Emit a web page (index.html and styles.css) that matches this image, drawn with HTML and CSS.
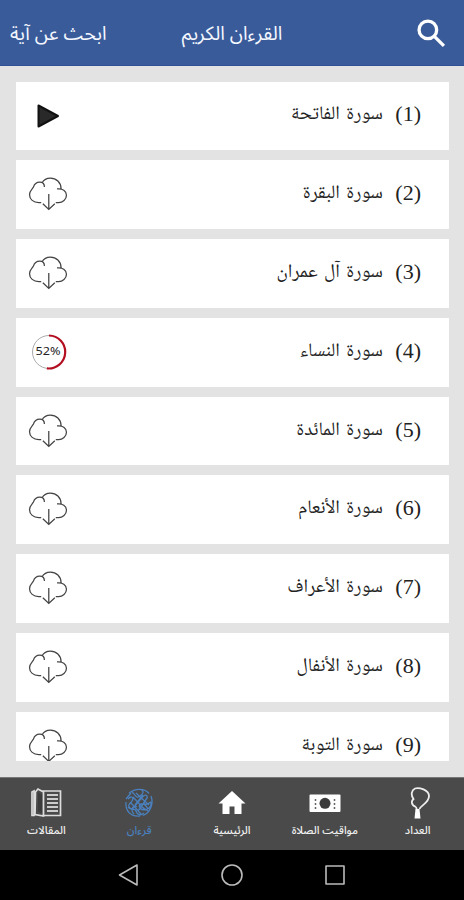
FILE: index.html
```html
<!DOCTYPE html>
<html lang="ar" dir="rtl">
  <head>
    <meta charset="UTF-8" />
    <meta name="viewport" content="width=device-width, initial-scale=1.0" />
    <title>القرءان الكريم</title>
    <link rel="stylesheet" href="styles.css">
  </head>
  <body>
    <!-- Shared icon -->
    <svg class="defs" width="0" height="0">
      <symbol id="cloud" viewBox="0 0 40 35">
        <path d="M13 26.3H10.500C5 26.300 1 23 1 18.300C1 14.500 3.500 12.500 5 10.500C6 7 8.500 5.300 11.500 5.300C14.500 5.300 16.300 7.500 16.300 10.300M13.700 6.300C15.500 3 18.500 1.200 22.500 1.200C28.500 1.200 33.300 5.500 33.500 12M29.300 12.300C35 11.500 39 14.500 39 18.700C39 23 35 26.300 31 26.300H28M20.800 17.500V33M14.700 27.500L20.800 33.300L27 27.500"/>
      </symbol>
    </svg>

    <header class="topbar">
      <svg class="search" viewBox="0 0 28 28"><circle cx="10.500" cy="10.500" r="8.500"/><path d="M16.500 16.500L26 26"/></svg>
      <h1 class="topbar-title">القرءان الكريم</h1>
      <span class="topbar-link">ابحث عن آية</span>
    </header>

    <main class="list">
      <div class="card"><span class="num">(1)</span><span class="name">سورة الفاتحة</span>
        <svg class="play" viewBox="0 0 24 26"><path d="M2.500 2.500V23.500L22 13Z"/></svg></div>
      <div class="card"><span class="num">(2)</span><span class="name">سورة البقرة</span>
        <svg class="cloud"><use href="#cloud"/></svg></div>
      <div class="card"><span class="num">(3)</span><span class="name">سورة آل عمران</span>
        <svg class="cloud"><use href="#cloud"/></svg></div>
      <div class="card"><span class="num">(4)</span><span class="name">سورة النساء</span>
        <svg class="progress" viewBox="0 0 36 36">
          <circle class="track" cx="18" cy="18" r="16.500"/>
          <path class="done" d="M18 1.500A16.500 16.500 0 1 1 15.900 34.400"/>
          <text x="17" y="21.300" direction="ltr" textLength="25" lengthAdjust="spacingAndGlyphs">52%</text>
        </svg></div>
      <div class="card"><span class="num">(5)</span><span class="name">سورة المائدة</span>
        <svg class="cloud"><use href="#cloud"/></svg></div>
      <div class="card"><span class="num">(6)</span><span class="name">سورة الأنعام</span>
        <svg class="cloud"><use href="#cloud"/></svg></div>
      <div class="card"><span class="num">(7)</span><span class="name">سورة الأعراف</span>
        <svg class="cloud"><use href="#cloud"/></svg></div>
      <div class="card"><span class="num">(8)</span><span class="name">سورة الأنفال</span>
        <svg class="cloud"><use href="#cloud"/></svg></div>
      <div class="card"><span class="num">(9)</span><span class="name">سورة التوبة</span>
        <svg class="cloud"><use href="#cloud"/></svg></div>
    </main>

    <nav class="tabs">
      <a class="tab">
        <svg viewBox="0 0 32 32"><path class="line" d="M14 20C9 18 9 14 11.500 12C8.500 8 9.500 3 13 1.500C17 0 27 3 27 9C27 16 19 18 17.500 22M14 20L15 23"/><path class="fill" d="M13.500 22H17.500L18.500 31.500H12.500Z"/></svg>
        <span>العداد</span>
      </a>
      <a class="tab">
        <svg viewBox="0 0 32 32"><rect class="fill" x="0.500" y="7.500" width="31" height="17.500" rx="1"/><circle class="hole" cx="16" cy="16.300" r="5.500"/><path class="dots" d="M6.500 12V22M25.500 12V22"/></svg>
        <span>مواقيت الصلاة</span>
      </a>
      <a class="tab">
        <svg viewBox="0 0 32 32"><path class="fill" d="M16 4L2.500 16.500H6.500V27H13.500V19.500H18.500V27H25.500V16.500H29.500Z"/></svg>
        <span>الرئيسية</span>
      </a>
      <a class="tab active">
        <svg viewBox="0 0 32 32"><path class="script" d="M6 6C12 1 22 1 26 6.500M28 9C31 17 27 26 20 28.500M17 29C8 30 2 24 3 15M3 12L8 6M5 12C9 8 11 11 9 14S4 18 7 21S13 17 16 14S22 6 24 9S18 15 22 17S28 12 28 17S20 25 17 21S21 14 25 22M9 5C13 8 13 12 17 9S21 4 18 3M5 20C8 25 12 20 13 24S18 29 21 26M10 10L22 23M8 16L18 27M13 6L26 18M14 20C10 17 7 23 11 27M20 8L12 18M23 13L15 24M25 24L19 20"/></svg>
        <span>قرءان</span>
      </a>
      <a class="tab">
        <svg viewBox="0 0 32 32"><path class="page" d="M12 4H30.500V28.500H12M2 5L4 4V28.500H2ZM5.500 5L8 2L13.500 5V29L5 27.500Z"/><path class="dark" d="M8 5.500L12 8V26L8 24.500Z"/><path class="rows" d="M17 8H28M17 12H28M17 16H28M17 20H28M17 24H28"/></svg>
        <span>المقالات</span>
      </a>
    </nav>

    <footer class="sysbar">
      <svg viewBox="0 0 24 24"><rect x="3" y="3" width="18" height="18"/></svg>
      <svg viewBox="0 0 24 24"><circle cx="12" cy="12" r="10"/></svg>
      <svg viewBox="0 0 24 24"><path d="M20 2V22L2.500 12Z"/></svg>
    </footer>
  </body>
</html>
```

FILE: styles.css
```css
* {
  box-sizing: border-box;
}

body {
  margin: 0;
  height: 900px;
  display: flex;
  flex-direction: column;
  overflow: hidden;
  background: #e3e3e3;
  font-family: "Noto Sans Arabic", "DejaVu Sans", sans-serif;
}

svg {
  display: block;
  flex: none;
  fill: none;
}

.defs {
  position: absolute;
}

.topbar {
  flex: none;
  height: 66px;
  display: grid;
  grid-template-columns: 1fr auto 1fr;
  align-items: center;
  padding: 2px 10px 0;
  background: #395b9a;
  border-bottom: 1px solid #2f5096;
  color: #f4f7ff;
}

.topbar-title,
.topbar-link {
  margin: 0;
  font-size: 19.3px;
  font-weight: 400;
  white-space: nowrap;
}

.topbar-link {
  justify-self: end;
}

.search {
  width: 29px;
  height: 29px;
  margin-right: 8px;
  stroke: #fff;
  stroke-width: 3.2;
}

.list {
  height: 695px;
  flex: none;
  display: flex;
  flex-direction: column;
  gap: 10px;
  padding: 15.5px 15px 0 16px;
  overflow: hidden;
}

.card {
  flex: none;
  height: 68.8px;
  display: flex;
  align-items: center;
  padding: 0 28px 1px 12px;
  background: #fff;
  color: #222;
}

.card svg {
  margin-right: auto;
}

.num {
  width: 38px;
  padding-bottom: 2px;
  font-family: "Liberation Serif", serif;
  font-size: 22px;
  line-height: 24px;
}

.name {
  font-family: "Noto Naskh Arabic", "Liberation Serif", serif;
  font-size: 19.2px;
  line-height: 24px;
  word-spacing: 2px;
  white-space: nowrap;
}

.cloud {
  width: 40px;
  height: 34px;
  stroke: #444;
  stroke-width: 1.3;
}

.play {
  width: 24px;
  height: 26px;
  margin-top: 2px;
  margin-left: 8px;
  fill: #292929;
  stroke: #111;
  stroke-width: 2;
  stroke-linejoin: round;
}

.progress {
  width: 36px;
  height: 36px;
  margin-left: 3px;
}

.track {
  stroke: #aaa;
  stroke-width: 1;
}

.done {
  stroke: #b40f20;
  stroke-width: 2.2;
}

.progress text {
  fill: #222;
  font-family: "Noto Sans", sans-serif;
  font-size: 10.5px;
  text-anchor: middle;
}

.tabs {
  flex: none;
  height: 73px;
  margin-top: 16px;
  display: grid;
  grid-template-columns: repeat(5, 1fr);
  background: #4a4a4a;
  border-top: 1px solid #777;
}

.tab {
  display: flex;
  flex-direction: column;
  align-items: center;
  padding-top: 9px;
  color: #f0f0f0;
  font-size: 11px;
  font-weight: 500;
  white-space: nowrap;
}

.tab svg {
  width: 32px;
  height: 32px;
}

.active {
  color: #4a80bd;
}

.fill {
  fill: #fff;
}

.line {
  stroke: #eee;
  stroke-width: 1.8;
}

.hole,
.dark {
  fill: #3c3c3c;
}

.dots {
  stroke: #666;
  stroke-width: 1.5;
  stroke-dasharray: 2 2;
}

.script {
  stroke: #4a80bd;
  stroke-width: 1.3;
}

.page {
  stroke: #ddd;
  stroke-width: 1.7;
}

.rows {
  stroke: #ccc;
  stroke-width: 2;
}

.sysbar {
  flex: 1;
  display: flex;
  justify-content: center;
  align-items: center;
  gap: 79px;
  background: #000;
}

.sysbar svg {
  width: 24px;
  height: 24px;
  stroke: #bbb;
  stroke-width: 1.6;
  stroke-linejoin: round;
}
```
